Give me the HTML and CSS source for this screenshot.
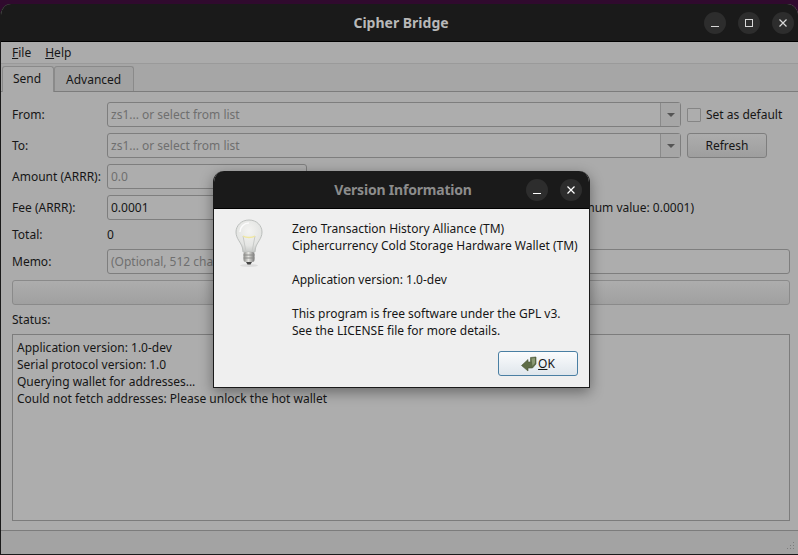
FILE: index.html
```html
<!DOCTYPE html>
<html lang="en">
<head>
  <meta charset="UTF-8">
  <title>Cipher Bridge</title>
  <link rel="stylesheet" href="styles.css">
</head>
<body>
  <div class="window">
    <div class="titlebar">
      <span class="title">Cipher Bridge</span>
      <div class="win-buttons">
        <span class="win-btn"><svg width="16" height="16" viewBox="0 0 16 16"><path d="M4 11.5h8" stroke="#d8d8d8" stroke-width="1"/></svg></span>
        <span class="win-btn"><svg width="16" height="16" viewBox="0 0 16 16"><rect x="4.5" y="4.5" width="7" height="7" fill="none" stroke="#d8d8d8"/></svg></span>
        <span class="win-btn"><svg width="16" height="16" viewBox="0 0 16 16"><path d="M4.5 4.5l7 7M11.5 4.5l-7 7" stroke="#d8d8d8" stroke-width="1.2"/></svg></span>
      </div>
    </div>

    <div class="menubar">
      <span class="menu"><u>F</u>ile</span>
      <span class="menu"><u>H</u>elp</span>
    </div>

    <div class="tabs">
      <span class="tab active">Send</span>
      <span class="tab">Advanced</span>
    </div>

    <div class="page">
      <div class="row">
        <label class="lbl">From:</label>
        <div class="combo grow"><span class="ph">zs1... or select from list</span><span class="arrow"></span></div>
        <div class="side"><span class="check"></span>Set as default</div>
      </div>
      <div class="row">
        <label class="lbl">To:</label>
        <div class="combo grow"><span class="ph">zs1... or select from list</span><span class="arrow"></span></div>
        <div class="side"><span class="btn">Refresh</span></div>
      </div>
      <div class="row">
        <label class="lbl">Amount (ARRR):</label>
        <div class="input short"><span class="ph">0.0</span></div>
      </div>
      <div class="row">
        <label class="lbl">Fee (ARRR):</label>
        <div class="input short">0.0001</div>
        <span class="hint">(minimum value: 0.0001)</span>
      </div>
      <div class="row low">
        <label class="lbl">Total:</label>
        <span>0</span>
      </div>
      <div class="row">
        <label class="lbl">Memo:</label>
        <div class="input grow"><span class="ph">(Optional, 512 characters max)</span></div>
      </div>
      <div class="send-btn"></div>
      <div class="status-lbl">Status:</div>
      <div class="log">
        <div>Application version: 1.0-dev</div>
        <div>Serial protocol version: 1.0</div>
        <div>Querying wallet for addresses...</div>
        <div>Could not fetch addresses: Please unlock the hot wallet</div>
      </div>
    </div>

    <div class="statusbar">
      <svg class="grip" width="10" height="10" viewBox="0 0 10 10" fill="#7c7c7c"><rect x="7" y="0" width="1" height="1"/><rect x="4" y="3" width="1" height="1"/><rect x="7" y="3" width="1" height="1"/><rect x="1" y="6" width="1" height="1"/><rect x="4" y="6" width="1" height="1"/><rect x="7" y="6" width="1" height="1"/></svg>
    </div>
  </div>

  <div class="dialog">
    <div class="titlebar dlg-title">
      <span class="title">Version Information</span>
      <div class="win-buttons tight">
        <span class="win-btn"><svg width="16" height="16" viewBox="0 0 16 16"><path d="M4 11.5h8" stroke="#fff" stroke-width="1"/></svg></span>
        <span class="win-btn"><svg width="16" height="16" viewBox="0 0 16 16"><path d="M4.5 4.5l7 7M11.5 4.5l-7 7" stroke="#fff" stroke-width="1.2"/></svg></span>
      </div>
    </div>
    <div class="dlg-body">
      <svg class="bulb" width="34" height="50" viewBox="0 0 34 50">
        <defs>
          <radialGradient id="glass" cx="50%" cy="35%" r="65%">
            <stop offset="0" stop-color="#f4f4f2"/>
            <stop offset="0.7" stop-color="#e4e5e3"/>
            <stop offset="1" stop-color="#c8cac8"/>
          </radialGradient>
          <linearGradient id="base" x1="0" x2="1" y1="0" y2="0">
            <stop offset="0" stop-color="#8b8b88"/>
            <stop offset="0.45" stop-color="#e4e4e0"/>
            <stop offset="1" stop-color="#777"/>
          </linearGradient>
        </defs>
        <path d="M17 1C9 1 4 7 4 13c0 7 5 10 6.500 16l.5 4h12l.5-4C25 23 30 20 30 13 30 7 25 1 17 1z" fill="url(#glass)" stroke="#bcbfbd"/>
        <path d="M8 13c0-5 4-9 9-9" stroke="#fbfbfb" stroke-width="1.500" fill="none"/>
        <path d="M14 33L11 17M20 33l3-16" stroke="#c8cac8" fill="none"/>
        <path d="M11 17c3 2 9 2 12 0" stroke="#f0e7a0" stroke-width="1.300" fill="none"/>
        <rect x="11.500" y="33" width="11" height="10" rx="2" fill="url(#base)"/>
        <path d="M11.500 36h11M11.500 39h11" stroke="#8c8c8a"/>
        <path d="M14 43h6l-1.500 2.500h-3z" fill="#444"/>
        <ellipse cx="17" cy="46.500" rx="9" ry="1.500" fill="#000" opacity=".08"/>
      </svg>
      <div class="dlg-text">
        <div>Zero Transaction History Alliance (TM)</div>
        <div>Ciphercurrency Cold Storage Hardware Wallet (TM)</div>
        <div class="gap">Application version: 1.0-dev</div>
        <div class="gap">This program is free software under the GPL v3.</div>
        <div>See the LICENSE file for more details.</div>
      </div>
    </div>
    <div class="dlg-foot">
      <span class="ok-btn">
        <svg width="16" height="16" viewBox="0 0 16 16"><path d="M0.500 9.500L7 3.500V6h2.500V1.500L15 1v7l-3.500 4H7v3z" fill="#5f6d47" stroke="#4a5636" stroke-width=".6"/><path d="M10.500 2.500l3.500-.5v5l-2.500 3" fill="#8d9a74"/></svg>
        <span class="ok-text"><u>O</u>K</span>
      </span>
    </div>
  </div>
</body>
</html>
```
FILE: styles.css
```css
html, body {
  margin: 0;
  height: 100%;
}
body {
  width: 798px;
  height: 555px;
  overflow: hidden;
  background: #300a2e;
  font-family: "Noto Sans", sans-serif;
  font-size: 12px;
  color: #161616;
  position: relative;
  padding-top: 4px;
  box-sizing: border-box;
}
.window {
  height: 551px;
  border-radius: 11px 11px 0 0;
  overflow: hidden;
  background: #ababab;
  display: flex;
  flex-direction: column;
  border-left: 1px solid #1a1a1a;
  border-bottom: 1px solid #1a1a1a;
  box-sizing: border-box;
}
.titlebar {
  height: 37px;
  flex: none;
  background: #1a1a1a;
  border-bottom: 1px solid #000;
  display: flex;
  align-items: center;
  justify-content: center;
  position: relative;
  padding-left: 3px;
}
.title {
  font-weight: 700;
  font-size: 14px;
  color: #b8b8b8;
}
.win-buttons {
  position: absolute;
  right: 4px;
  top: 8px;
  display: flex;
  gap: 12px;
}
.win-btn {
  width: 22px;
  height: 22px;
  border-radius: 50%;
  background: #2d2d2d;
  display: flex;
  align-items: center;
  justify-content: center;
}
.menubar {
  height: 21px;
  flex: none;
  display: flex;
  align-items: center;
  gap: 14px;
  padding-left: 11px;
  border-bottom: 1px solid #9a9a9a;
}
.tabs {
  height: 27px;
  flex: none;
  display: flex;
  align-items: flex-end;
  padding-left: 1px;
  border-bottom: 1px solid #7c7c7c;
  background: #a6a6a6;
}
.tab {
  height: 24px;
  padding: 0 12px 0 11px;
  display: flex;
  align-items: center;
  border: 1px solid #8a8a8a;
  border-bottom: none;
  border-radius: 3px 3px 0 0;
  background: #a2a2a2;
}
.tab.active {
  height: 26px;
  background: #ababab;
  margin-bottom: -1px;
  padding: 0 10px 2px;
  box-sizing: border-box;
  width: 52px;
}
.page {
  flex: 1;
  padding: 10px 8px 0 11px;
  display: flex;
  flex-direction: column;
}
.row {
  display: flex;
  align-items: center;
  height: 25px;
  margin-bottom: 6px;
}
.row.low {
  height: 16px;
  padding-bottom: 2px;
  margin-bottom: 5px;
}
.lbl {
  width: 95px;
  flex: none;
}
.combo, .input {
  height: 25px;
  box-sizing: border-box;
  border: 1px solid #7e7e7e;
  border-radius: 3px;
  background: #adadad;
  display: flex;
  align-items: center;
  padding-left: 3px;
}
.grow {
  flex: 1;
}
.short {
  width: 200px;
  flex: none;
}
.ph {
  color: #6f6f6f;
}
.combo .ph {
  flex: 1;
}
.arrow {
  width: 19px;
  height: 100%;
  border-left: 1px solid #8a8a8a;
  position: relative;
  background: #a6a6a6;
}
.arrow::after {
  content: "";
  position: absolute;
  left: 6px;
  top: 10px;
  border: 4px solid transparent;
  border-top: 4px solid #555;
  border-bottom: none;
  width: 0;
  height: 0;
}
.side {
  width: 103px;
  flex: none;
  margin-left: 6px;
  display: flex;
  align-items: center;
  white-space: nowrap;
}
.check {
  width: 12px;
  height: 12px;
  border: 1px solid #858585;
  border-radius: 1px;
  margin-right: 5px;
  background: #adadad;
}
.btn {
  width: 78px;
  height: 23px;
  border: 1px solid #7e7e7e;
  border-radius: 3px;
  background: linear-gradient(#adadad, #9e9e9e);
  display: flex;
  align-items: center;
  justify-content: center;
}
.hint {
  margin-left: 248px;
  white-space: nowrap;
}
.send-btn {
  height: 25px;
  box-sizing: border-box;
  border: 1px solid #8a8a8a;
  border-radius: 3px;
  background: linear-gradient(#adadad, #a0a0a0);
}
.status-lbl {
  margin-top: 6px;
  height: 18px;
  line-height: 18px;
}
.log {
  margin-top: 5px;
  height: 187px;
  box-sizing: border-box;
  border: 1px solid #7c7c7c;
  background: #adadad;
  padding: 4px 4px;
  line-height: 17px;
}
.statusbar {
  height: 23px;
  flex: none;
  border-top: 1px solid #7c7c7c;
  background: #a3a3a3;
  position: relative;
}
.grip {
  position: absolute;
  right: 2px;
  bottom: 2px;
}
.dialog {
  position: absolute;
  left: 213px;
  top: 171px;
  width: 377px;
  height: 217px;
  border-radius: 11px 11px 0 0;
  overflow: hidden;
  background: #efefef;
  box-sizing: border-box;
  border: 1px solid #1a1a1a;
  border-top: none;
  box-shadow: 0 4px 14px rgba(0, 0, 0, 0.4);
  display: flex;
  flex-direction: column;
}
.dlg-title .title {
  color: #8c8c8c;
  letter-spacing: -0.2px;
}
.win-buttons.tight {
  top: 8px;
  right: 7px;
  gap: 12px;
}
.dlg-body {
  display: flex;
  flex: 1;
  padding: 10px 0 0 18px;
}
.bulb {
  flex: none;
}
.dlg-text {
  margin-left: 26px;
  padding-top: 1px;
  line-height: 17px;
  white-space: nowrap;
}
.dlg-text .gap {
  margin-top: 17px;
}
.dlg-foot {
  height: 36px;
  flex: none;
  display: flex;
  justify-content: flex-end;
  padding-right: 11px;
}
.ok-btn {
  width: 80px;
  height: 25px;
  box-sizing: border-box;
  border: 1px solid #4a7fa3;
  border-radius: 3px;
  background: linear-gradient(#fbfcfd, #dfe6ec);
  display: flex;
  align-items: center;
  justify-content: center;
  gap: 1px;
}
```
